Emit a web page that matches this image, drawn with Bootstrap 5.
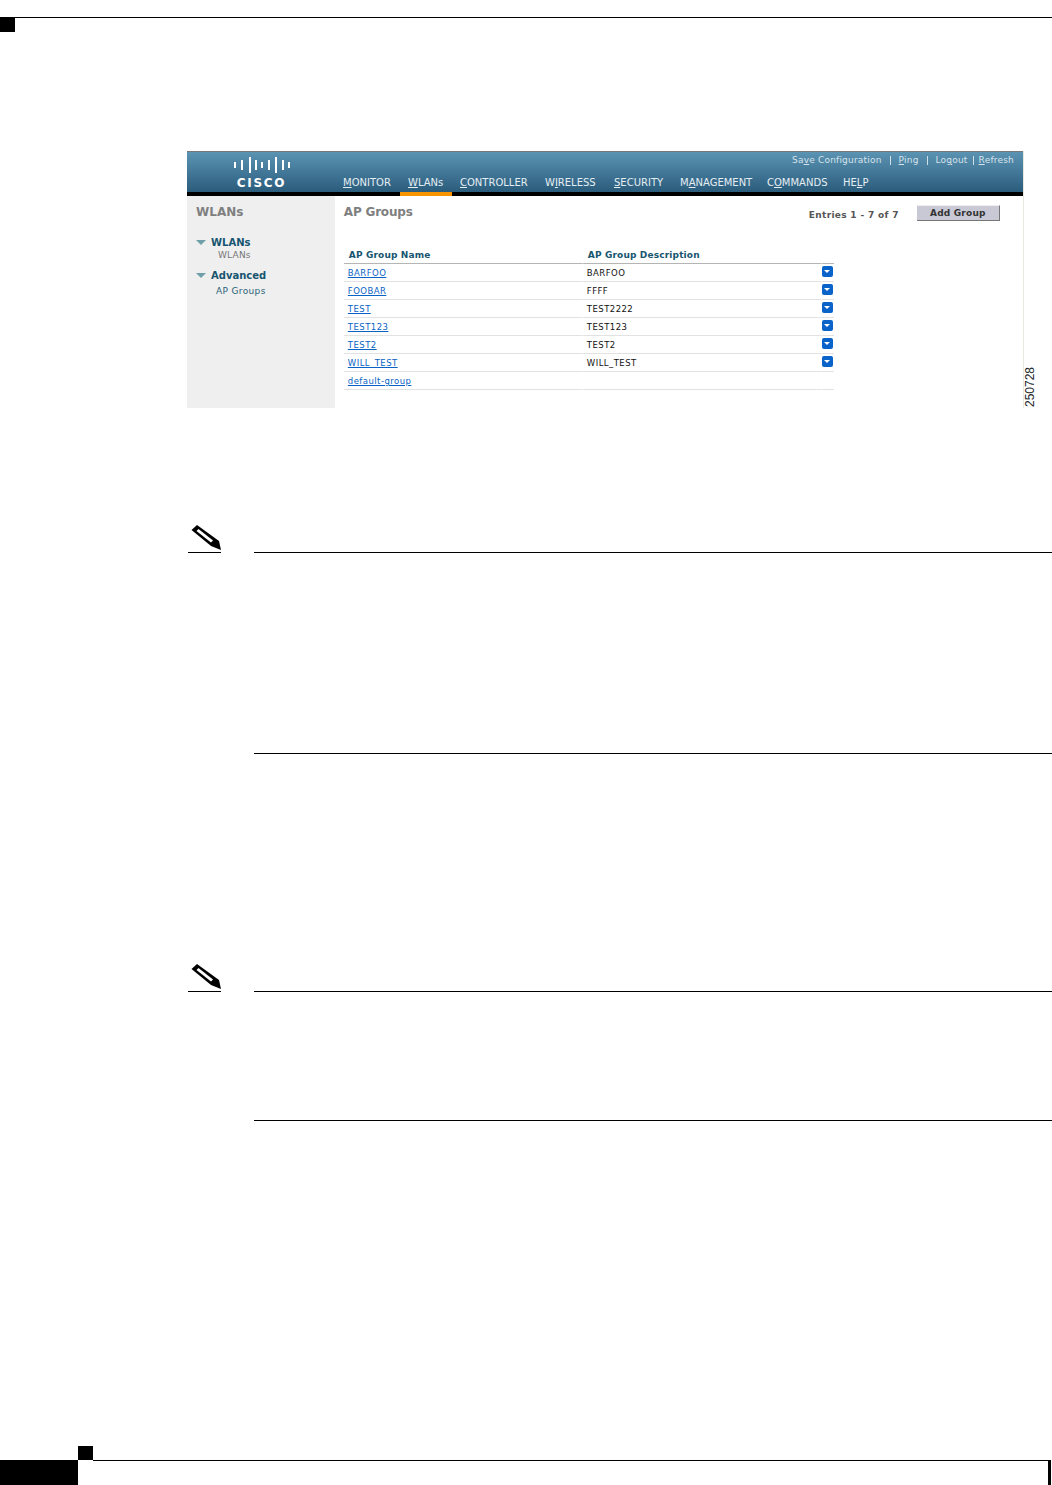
<!DOCTYPE html>
<html lang="en">
<head>
  <meta charset="UTF-8" />
  <meta name="viewport" content="width=device-width, initial-scale=1" />
  <title>AP Groups</title>
  <link href="https://cdn.jsdelivr.net/npm/bootstrap@5.3.0/dist/css/bootstrap.min.css" rel="stylesheet" />
  <style>
    body {
      width: 1052px;
      height: 1485px;
      background: #fff;
      font-family: "DejaVu Sans", Verdana, sans-serif;
      font-size: 9px;
      overflow: hidden;
    }
    .page-top { height: 31px; margin-top: 17px; border-top: 1px solid #000; }
    .top-square { width: 15px; height: 14px; background: #000; }

    .shot { margin: 103px 0 0 187px; width: 850px; }
    .shot-panel { width: 837px; height: 257px; border-right: 1px solid #e8e8e0; }
    .ctl-head {
      height: 45px;
      border-top: 1px solid #777;
      border-bottom: 4px solid #000;
      background: linear-gradient(#5b93b3, #2b5c7c);
      color: #e4eef3;
    }
    .logo-box { width: 148px; padding-left: 1px; }
    .logo-bars { margin-top: 5px; }
    .logo-word { font-size: 12px; font-weight: 700; letter-spacing: 1.7px; line-height: 12px; color: #fff; margin-top: 4px; }
    .ctl-right { padding-right: 9px; }
    .top-links { height: 16px; gap: 8px; font-size: 9px; letter-spacing: .2px; line-height: 12px; color: #d5e3ea; }
    .top-links i { width: 1px; height: 9px; background: #cfe0e8; }
    .top-links .tight { margin-left: -3px; margin-right: -3px; }
    .menu-row { padding-left: 8px; height: 24px; font-size: 10px; line-height: 14px; padding-top: 8px; }
    .menu-item { position: relative; }
    .menu-item.on::after {
      content: "";
      position: absolute;
      left: -8px;
      right: -9px;
      top: 16px;
      height: 4px;
      background: #f79400;
    }
    .m1 { width: 65px; } .m2 { width: 52px; } .m3 { width: 85px; } .m4 { width: 69px; }
    .m5 { width: 66px; } .m6 { width: 87px; } .m7 { width: 76px; }

    .side-nav { width: 148px; background: #efefef; padding: 9px 0 0 9px; height: 212px; }
    .side-title { font-size: 12px; font-weight: 700; color: #7f7f7f; line-height: 14px; }
    .side-group { font-size: 10px; font-weight: 700; color: #17556f; line-height: 13px; gap: 5px; }
    .first-group { margin-top: 17px; }
    .side-sub { font-size: 9px; line-height: 12px; letter-spacing: .2px; margin-left: 22px; color: #777; }
    .side-sub.ap-sub { margin-left: 20px; margin-top: 3px; letter-spacing: .35px; color: #2a6478; }
    .tri { width: 0; height: 0; border-left: 5px solid transparent; border-right: 5px solid transparent; border-top: 5px solid #6f9fa8; }

    .main-area { width: 689px; padding: 9px 0 0 9px; position: relative; }
    .main-title { font-size: 12px; font-weight: 700; color: #7f7f7f; line-height: 14px; letter-spacing: -.2px; }
    .entries { position: absolute; left: 474px; top: 13px; font-size: 9px; font-weight: 700; color: #555; letter-spacing: .32px; line-height: 12px; }
    .add-btn {
      position: absolute;
      left: 582px;
      top: 9px;
      width: 83px;
      height: 16px;
      padding: 0;
      border: 0;
      border-top: 1px solid #eee;
      border-right: 1px solid #777;
      border-bottom: 1px solid #777;
      border-radius: 0;
      background: #c9c9d6;
      color: #333;
      font-size: 9px;
      font-weight: 700;
      letter-spacing: .2px;
      line-height: 13px;
    }
    .grp-tbl { width: 490px; margin: 27px 0 0 0; table-layout: fixed; border-collapse: separate; border-spacing: 0; }
    .grp-tbl th {
      height: 18px;
      padding: 0 0 1px 5px;
      font-size: 9px;
      color: #17556f;
      letter-spacing: .15px;
      border-bottom: 1px solid #b5b5b5;
      background: transparent;
    }
    .grp-tbl td {
      height: 18px;
      padding: 2px 0 0 4px;
      font-size: 8.5px;
      letter-spacing: .45px;
      color: #111;
      vertical-align: middle;
      border-bottom: 1px solid #e2e2e2;
      background: transparent;
    }
    .grp-tbl th + th, .grp-tbl td + td { border-left: 1px solid #fff; }
    .grp-tbl a { color: #0a63c4; }
    .grp-tbl td.arrow-cell { padding: 0 0 2px 0; }
    .col-name { width: 238px; }
    .col-arrow { width: 13px; }
    .down-btn { width: 11px; height: 11px; background: #0a63c9; border-radius: 2px; }
    .down-btn::before { content: ""; border-left: 3px solid transparent; border-right: 3px solid transparent; border-top: 3px solid #fff; }
    .fig-no { width: 13px; height: 257px; writing-mode: vertical-rl; transform: rotate(180deg); font-family: "Liberation Sans", Arial, sans-serif; font-size: 12px; line-height: 13px; text-align: left; padding-top: 1px; }

    .note-box { margin-left: 188px; }
    .note-one { margin-top: 117px; }
    .note-two { margin-top: 210px; }
    .pencil-col { width: 33px; border-bottom: 1px solid #000; margin-right: 33px; height: 28px; }
    .pencil-col svg { display: block; }
    .note-rule { flex: 1; border-bottom: 1px solid #000; height: 28px; }
    .note-end { margin-left: 254px; border-bottom: 1px solid #000; }
    .end-one { height: 201px; }
    .end-two { height: 129px; }

    .page-foot { margin-top: 325px; }
    .foot-block { width: 78px; height: 25px; margin-top: 14px; background: #000; }
    .foot-square { width: 15px; height: 14px; background: #000; }
    .foot-rule { height: 25px; flex: 1; border-top: 1px solid #000; margin-top: 14px; border-right: 3px solid #000; margin-right: 1px; }
  </style>
</head>
<body>

<div class="page-top"><div class="top-square"></div></div>

<div class="shot d-flex">
  <div class="shot-panel">
    <div class="ctl-head d-flex">
      <div class="logo-box d-flex flex-column align-items-center">
        <svg class="logo-bars" width="56" height="16" viewBox="0 0 56 16" fill="#fff">
          <rect x="0" y="5" width="2" height="6"/>
          <rect x="7" y="3" width="2" height="10"/>
          <rect x="15" y="0" width="2" height="16"/>
          <rect x="21" y="3" width="2" height="10"/>
          <rect x="27" y="5" width="2" height="6"/>
          <rect x="34" y="3" width="2" height="10"/>
          <rect x="41" y="0" width="2" height="16"/>
          <rect x="48" y="3" width="2" height="10"/>
          <rect x="54" y="5" width="2" height="6"/>
        </svg>
        <div class="logo-word">CISCO</div>
      </div>
      <div class="ctl-right flex-grow-1">
        <div class="top-links d-flex justify-content-end align-items-center">
          <span>Sa<u>v</u>e Configuration</span><i></i>
          <span><u>P</u>ing</span><i></i>
          <span>Lo<u>g</u>out</span><i class="tight"></i>
          <span><u>R</u>efresh</span>
        </div>
        <div class="menu-row d-flex">
          <div class="menu-item m1"><u>M</u>ONITOR</div>
          <div class="menu-item m2"><span class="menu-item on d-inline-block"><u>W</u>LANs</span></div>
          <div class="menu-item m3"><u>C</u>ONTROLLER</div>
          <div class="menu-item m4">W<u>I</u>RELESS</div>
          <div class="menu-item m5"><u>S</u>ECURITY</div>
          <div class="menu-item m6">M<u>A</u>NAGEMENT</div>
          <div class="menu-item m7">C<u>O</u>MMANDS</div>
          <div class="menu-item">HE<u>L</u>P</div>
        </div>
      </div>
    </div>
    <div class="d-flex">
      <div class="side-nav">
        <div class="side-title">WLANs</div>
        <div class="side-group first-group d-flex align-items-center"><span class="tri"></span><span>WLANs</span></div>
        <div class="side-sub">WLANs</div>
        <div class="side-group d-flex align-items-center mt-2"><span class="tri"></span><span>Advanced</span></div>
        <div class="side-sub ap-sub">AP Groups</div>
      </div>
      <div class="main-area">
        <div class="main-title">AP Groups</div>
        <div class="entries">Entries 1 - 7 of 7</div>
        <button class="btn add-btn" type="button">Add Group</button>
        <table class="table grp-tbl mb-0">
          <thead>
            <tr><th class="col-name">AP Group Name</th><th>AP Group Description</th><th class="col-arrow"></th></tr>
          </thead>
          <tbody id="grpRows"></tbody>
        </table>
      </div>
    </div>
  </div>
  <div class="fig-no">250728</div>
</div>

<div class="note-box note-one d-flex">
  <div class="pencil-col">
    <svg width="33" height="27" viewBox="0 0 33 27">
      <polygon points="9,0 3.5,5 23,21 33,25 31,16" fill="#000"/>
      <polygon points="10.5,4 8.5,6 23,17.5 25,15.5" fill="#fff"/>
    </svg>
  </div>
  <div class="note-rule"></div>
</div>
<div class="note-end end-one"></div>

<div class="note-box note-two d-flex">
  <div class="pencil-col">
    <svg width="33" height="27" viewBox="0 0 33 27">
      <polygon points="9,0 3.5,5 23,21 33,25 31,16" fill="#000"/>
      <polygon points="10.5,4 8.5,6 23,17.5 25,15.5" fill="#fff"/>
    </svg>
  </div>
  <div class="note-rule"></div>
</div>
<div class="note-end end-two"></div>

<div class="page-foot d-flex">
  <div class="foot-block"></div>
  <div class="foot-square"></div>
  <div class="foot-rule"></div>
</div>

<script>
  const groups = [
    ['BARFOO', 'BARFOO'],
    ['FOOBAR', 'FFFF'],
    ['TEST', 'TEST2222'],
    ['TEST123', 'TEST123'],
    ['TEST2', 'TEST2'],
    ['WILL_TEST', 'WILL_TEST'],
    ['default-group', '']
  ];
  document.getElementById('grpRows').innerHTML = groups.map(g => `
    <tr>
      <td><a href="#">${g[0]}</a></td>
      <td>${g[1]}</td>
      <td class="arrow-cell">${g[1] ? '<div class="down-btn d-flex align-items-center justify-content-center"></div>' : ''}</td>
    </tr>`).join('');
</script>
<script src="https://cdn.jsdelivr.net/npm/bootstrap@5.3.0/dist/js/bootstrap.bundle.min.js"></script>
</body>
</html>
